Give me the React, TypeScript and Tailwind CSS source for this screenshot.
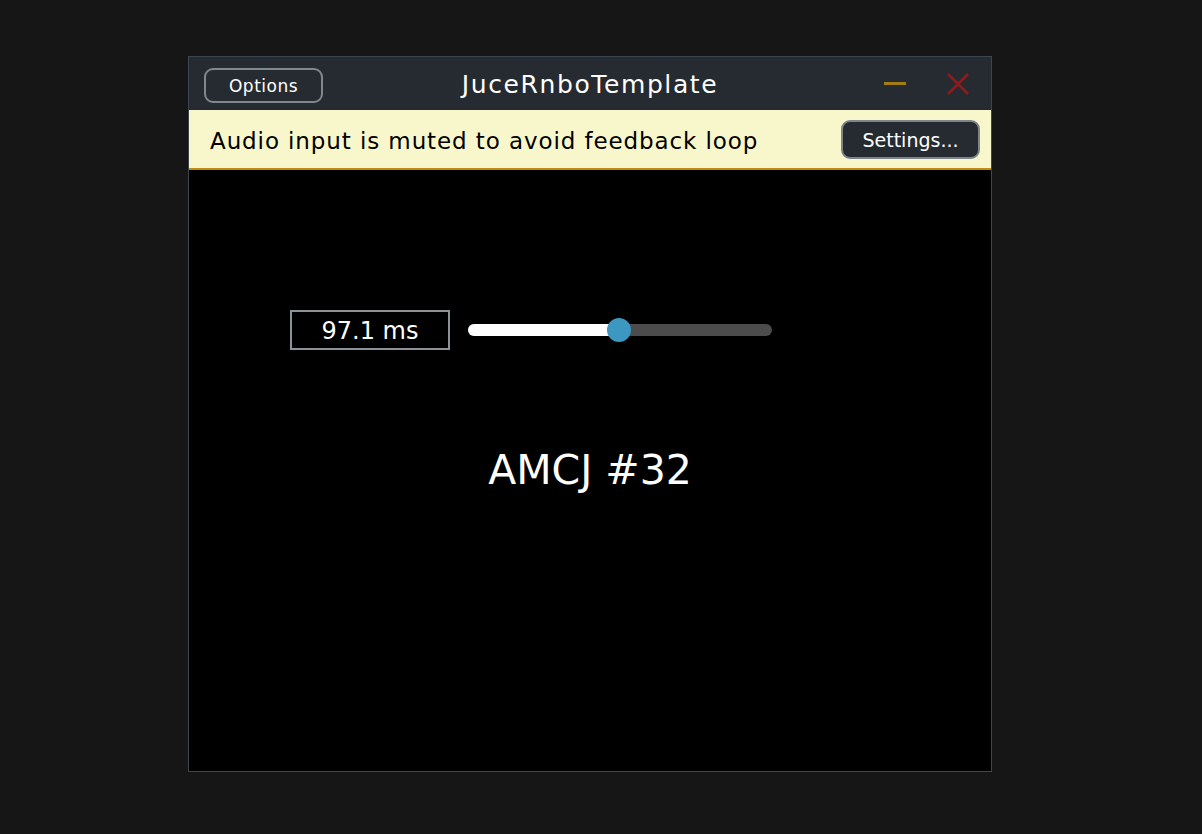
const App = () => {
    return (
        <main
            className="w-[1202px] h-[834px] bg-[#161616] pt-[56px] pl-[188px]"
            style={{ fontFamily: '"DejaVu Sans", "Noto Sans", sans-serif' }}
        >
            <div className="w-[804px] h-[716px] border border-[#3d454e] flex flex-col bg-black">
                {/* title bar */}
                <div className="h-[53px] bg-[#252b31] grid grid-cols-[1fr_auto_1fr] items-center">
                    <div className="pl-[15px] pt-[3px]">
                        <button className="w-[119px] h-[35px] rounded-[9px] border-2 border-[#80878d] text-white text-[17px] tracking-[0.5px] leading-none pt-[2px]">
                            Options
                        </button>
                    </div>
                    <h1 className="text-white text-[25px] tracking-[1.6px] pt-[2px]">
                        JuceRnboTemplate
                    </h1>
                    <div className="flex justify-end items-center gap-[40px] pr-[21px]">
                        <div className="w-[22px] h-[3px] bg-[#a17e12]" />
                        <svg width="24" height="24" viewBox="0 0 24 24">
                            <path d="M2 2 L22 22 M22 2 L2 22" stroke="#8e1c1c" strokeWidth="2.6" />
                        </svg>
                    </div>
                </div>

                {/* warning banner */}
                <div className="h-[60px] bg-[#f8f7cb] border-b-2 border-[#c28a12] flex items-center justify-between pl-[21px] pr-[11px]">
                    <span className="text-black text-[23px] tracking-[0.9px] pt-[4px]">
                        Audio input is muted to avoid feedback loop
                    </span>
                    <button className="w-[139px] h-[39px] rounded-[9px] bg-[#252b31] border-2 border-[#7d858b] text-white text-[19px] leading-none pt-[2px]">
                        Settings...
                    </button>
                </div>

                {/* content */}
                <div className="flex-1 flex flex-col items-center pt-[140px]">
                    <div className="self-start ml-[101px] flex items-center gap-[18px]">
                        <div className="w-[160px] h-[40px] border-2 border-[#8a9397] flex items-center justify-center text-white text-[24px] pt-[1px]">
                            97.1 ms
                        </div>
                        <div className="relative w-[304px] h-[12px] rounded-full bg-[#4c4c4c]">
                            <div className="h-full w-[151px] rounded-full bg-white" />
                            <div className="absolute left-[139px] top-[-6px] w-[24px] h-[24px] rounded-full bg-[#3c97c1]" />
                        </div>
                    </div>
                    <div className="mt-[94px] text-white text-[41px] leading-[52px]">
                        AMCJ #32
                    </div>
                </div>
            </div>
        </main>
    );
};

export default App;
